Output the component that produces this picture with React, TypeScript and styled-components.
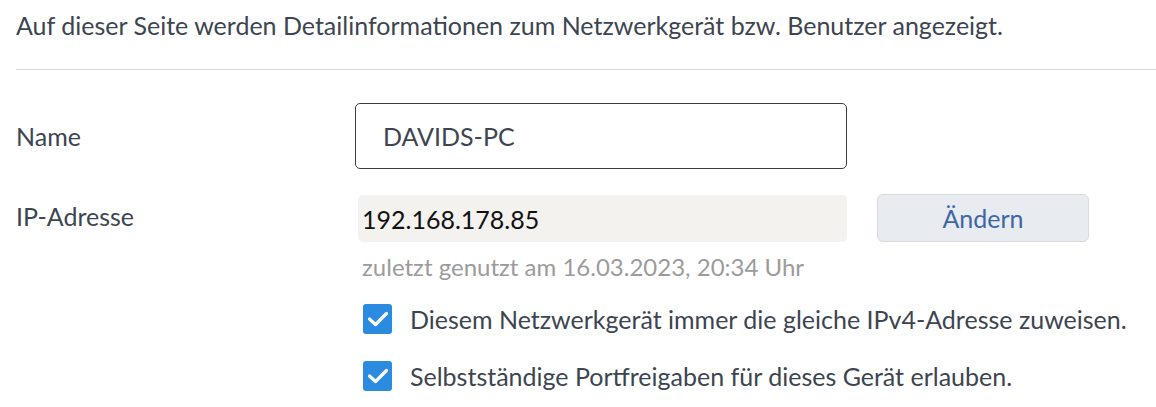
import React from "react";
import styled, { createGlobalStyle } from "styled-components";

const Global = createGlobalStyle`
  html, body { margin: 0; padding: 0; background: #ffffff; }
  body { font-family: "Lato", "Open Sans", sans-serif; color: #3c4550; }
  * { box-sizing: border-box; }
`;

const Page = styled.div`
  padding-left: 16px;
  padding-top: 7px;
`;

const Intro = styled.p`
  margin: 0;
  font-size: 25px;
  line-height: 36px;
  padding-bottom: 26px;
  border-bottom: 1px solid #d9d9d9;
`;

const Form = styled.div`
  display: grid;
  grid-template-columns: 339px 1fr;
  row-gap: 26px;
  padding-top: 33px;
`;

const Label = styled.div<{ $top?: boolean }>`
  font-size: 25px;
  line-height: 36px;
  align-self: ${(p) => (p.$top ? "start" : "center")};
  padding-top: ${(p) => (p.$top ? "3px" : "0")};
`;

const TextInput = styled.div`
  width: 492px;
  height: 66px;
  border: 1px solid #3c3c3c;
  border-radius: 5px;
  padding-left: 27px;
  display: flex;
  align-items: center;
  font-size: 25px;
  color: #3c4550;
`;

const Column = styled.div`
  display: flex;
  flex-direction: column;
`;

const FieldRow = styled.div`
  display: flex;
  align-items: center;
  gap: 30px;
`;

const ReadOnlyField = styled.div`
  margin-left: 3px;
  width: 489px;
  height: 47px;
  background: #f3f2ef;
  border-radius: 5px;
  padding-left: 4px;
  display: flex;
  align-items: center;
  font-size: 25px;
  color: #111111;
`;

const Button = styled.button`
  width: 212px;
  height: 48px;
  background: #e8ebef;
  border: 1px solid #d6dadf;
  border-radius: 6px;
  font-family: inherit;
  font-size: 25px;
  color: #3d66a6;
  padding: 0;
  margin-top: -1px;
`;

const Hint = styled.div`
  margin: 9px 0 0 7px;
  font-size: 24px;
  line-height: 32px;
  color: #9b9b9b;
`;

const Checks = styled.div`
  display: flex;
  flex-direction: column;
  gap: 27px;
  margin: 21px 0 0 8px;
`;

const CheckRow = styled.label`
  display: flex;
  align-items: center;
  gap: 18px;
  font-size: 25px;
  line-height: 30px;
`;

const Box = styled.span`
  width: 29px;
  height: 30px;
  border-radius: 3px;
  background: #2b8be0;
  display: inline-flex;
  align-items: center;
  justify-content: center;
  flex: none;
`;

const Check = () => (
  <Box>
    <svg width="22" height="16" viewBox="0 0 22 16" fill="none">
      <path d="M2.5 8 L8.5 13.5 L19.5 2.5" stroke="#fff" strokeWidth="3.2" strokeLinecap="round" strokeLinejoin="round" />
    </svg>
  </Box>
);

export default function App() {
  return (
    <Page>
      <Global />
      <Intro>Auf dieser Seite werden Detailinformationen zum Netzwerkgerät bzw. Benutzer angezeigt.</Intro>
      <Form>
        <Label>Name</Label>
        <TextInput>DAVIDS-PC</TextInput>
        <Label $top>IP-Adresse</Label>
        <Column>
          <FieldRow>
            <ReadOnlyField>192.168.178.85</ReadOnlyField>
            <Button>Ändern</Button>
          </FieldRow>
          <Hint>zuletzt genutzt am 16.03.2023, 20:34 Uhr</Hint>
          <Checks>
            <CheckRow>
              <Check />
              Diesem Netzwerkgerät immer die gleiche IPv4-Adresse zuweisen.
            </CheckRow>
            <CheckRow>
              <Check />
              Selbstständige Portfreigaben für dieses Gerät erlauben.
            </CheckRow>
          </Checks>
        </Column>
      </Form>
    </Page>
  );
}
